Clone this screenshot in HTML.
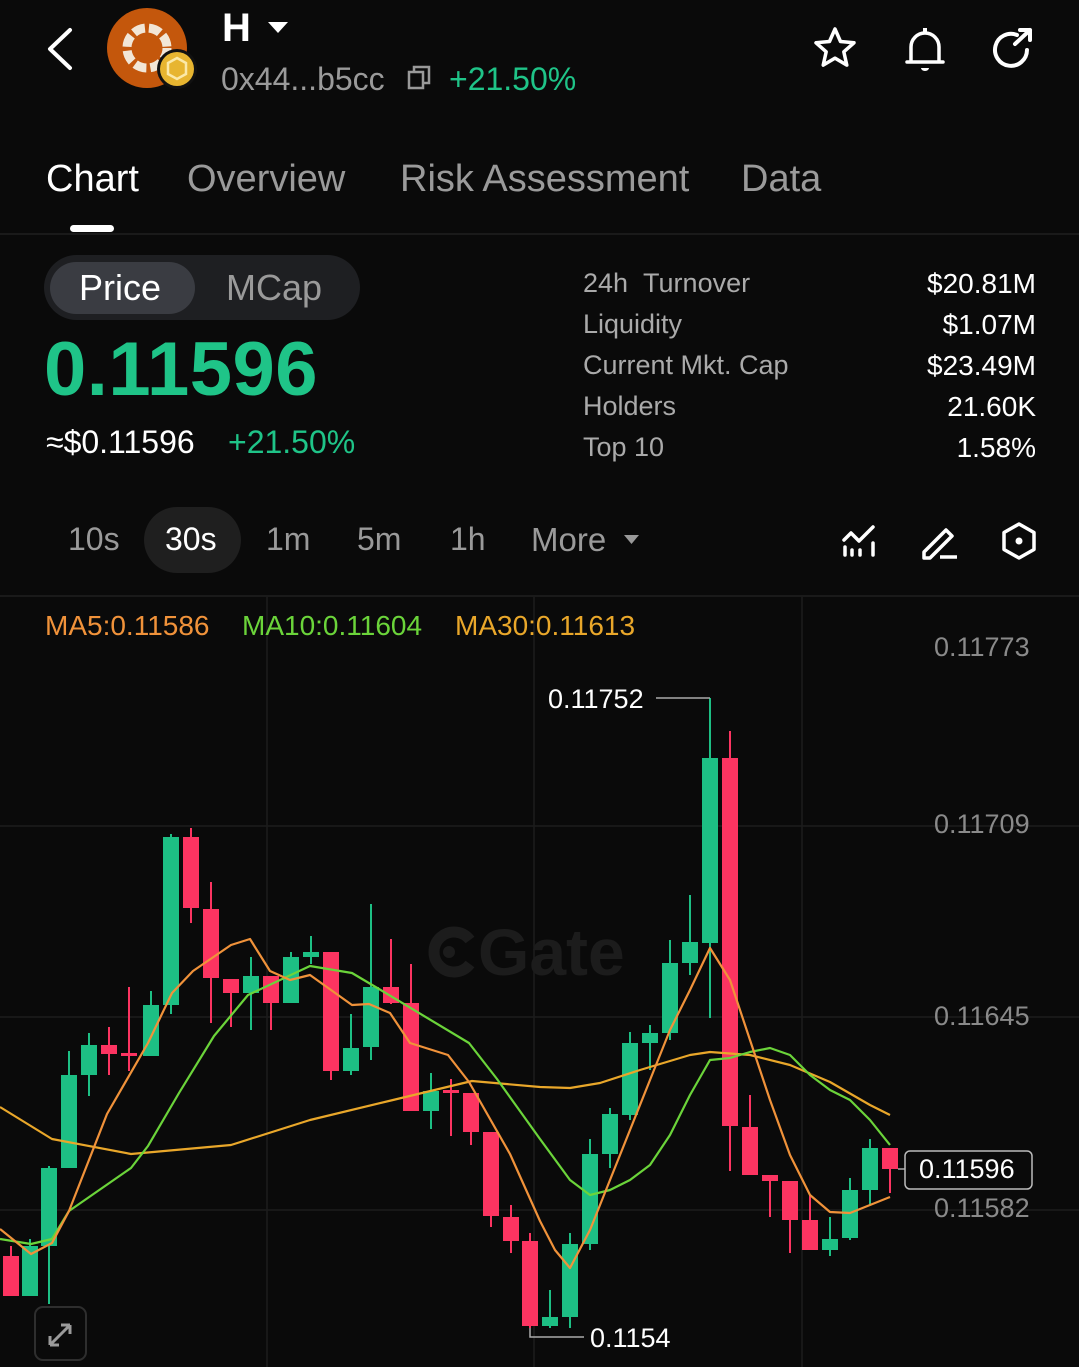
<!DOCTYPE html>
<html><head><meta charset="utf-8"><style>
*{margin:0;padding:0;box-sizing:border-box}
body{width:1079px;height:1367px;background:#0a0a0a;font-family:"Liberation Sans",sans-serif;color:#fff;position:relative;overflow:hidden}
.a{position:absolute;white-space:nowrap}
.g{color:#1fc488}
.gr{color:#9a9a9a}
</style></head><body>
<svg class="a" style="left:0;top:0" width="1079" height="110">
<polyline points="70,30 50,49 70,68" fill="none" stroke="#fff" stroke-width="4" stroke-linecap="round" stroke-linejoin="round"/>
<circle cx="147" cy="48" r="40" fill="#c4570c"/>
<circle cx="147" cy="48" r="20" fill="none" stroke="#f2e6d6" stroke-width="9" stroke-dasharray="12 4"/>
<circle cx="177" cy="69" r="20" fill="#111"/>
<circle cx="177" cy="69" r="17" fill="#e7b530"/>
<path d="M177 58 l9 5 v11 l-9 5 l-9-5 v-11z" fill="none" stroke="#fbe9a8" stroke-width="2.5"/>
<polygon points="268,22 288,22 278,33" fill="#fff"/>
<rect x="409" y="72" width="14" height="16" fill="none" stroke="#999" stroke-width="2.5"/>
<path d="M414 72 v-5 h15 v16 h-6" fill="none" stroke="#999" stroke-width="2.5"/>
<path d="M835 29 l5.5 12.5 13.5 1.3 -10.2 9 3 13.3 -11.8-7 -11.8 7 3-13.3 -10.2-9 13.5-1.3z" fill="none" stroke="#fff" stroke-width="3.5" stroke-linejoin="round"/>
<path d="M907 62 h36 M911 62 v-15 a14 14 0 0 1 28 0 v15" fill="none" stroke="#fff" stroke-width="3.5" stroke-linecap="round"/>
<path d="M921 68 a4 3 0 0 0 8 0z" fill="#fff"/><rect x="923" y="28" width="4" height="5" fill="#fff"/>
<path d="M1027 50 a16 16 0 1 1 -10 -15" fill="none" stroke="#fff" stroke-width="4" stroke-linecap="round"/>
<path d="M1015 44 l15-14 M1020 30 h10 v10" fill="none" stroke="#fff" stroke-width="4" stroke-linecap="round" stroke-linejoin="round"/>
</svg>
<div class="a" style="left:222px;top:6px;font-size:40px;font-weight:bold">H</div>
<div class="a gr" style="left:221px;top:61px;font-size:32px">0x44...b5cc</div>
<div class="a g" style="left:449px;top:61px;font-size:32px">+21.50%</div>
<div class="a" style="left:46px;top:158px;font-size:38px">Chart</div>
<div class="a gr" style="left:187px;top:158px;font-size:38px">Overview</div>
<div class="a gr" style="left:400px;top:158px;font-size:38px">Risk Assessment</div>
<div class="a gr" style="left:741px;top:158px;font-size:38px">Data</div>
<div class="a" style="left:70px;top:225px;width:44px;height:7px;border-radius:4px;background:#fff"></div>
<div class="a" style="left:0;top:233px;width:1079px;height:2px;background:#1a1a1a"></div>
<div class="a" style="left:44px;top:255px;width:316px;height:65px;border-radius:33px;background:#1e1f22"></div>
<div class="a" style="left:50px;top:262px;width:145px;height:52px;border-radius:26px;background:#3a3c42"></div>
<div class="a" style="left:79px;top:267px;font-size:36px">Price</div>
<div class="a gr" style="left:226px;top:267px;font-size:36px">MCap</div>
<div class="a g" style="left:44px;top:326px;font-size:76px;font-weight:bold;letter-spacing:0.5px">0.11596</div>
<div class="a" style="left:46px;top:424px;font-size:32px">≈$0.11596</div>
<div class="a g" style="left:228px;top:424px;font-size:32px">+21.50%</div>
<div class="a" style="left:583px;top:263px;width:453px;font-size:27px;line-height:41px">
<div style="display:flex;justify-content:space-between"><span style="color:#aaa">24h&nbsp;&nbsp;Turnover</span><span style="font-size:28px">$20.81M</span></div>
<div style="display:flex;justify-content:space-between"><span style="color:#aaa">Liquidity</span><span style="font-size:28px">$1.07M</span></div>
<div style="display:flex;justify-content:space-between"><span style="color:#aaa">Current Mkt. Cap</span><span style="font-size:28px">$23.49M</span></div>
<div style="display:flex;justify-content:space-between"><span style="color:#aaa">Holders</span><span style="font-size:28px">21.60K</span></div>
<div style="display:flex;justify-content:space-between"><span style="color:#aaa">Top 10</span><span style="font-size:28px">1.58%</span></div>
</div>
<div class="a" style="left:144px;top:507px;width:97px;height:66px;border-radius:33px;background:#1f1f1f"></div>
<div class="a gr" style="left:68px;top:521px;font-size:32px">10s</div>
<div class="a" style="left:165px;top:521px;font-size:32px">30s</div>
<div class="a gr" style="left:266px;top:521px;font-size:32px">1m</div>
<div class="a gr" style="left:357px;top:521px;font-size:32px">5m</div>
<div class="a gr" style="left:450px;top:521px;font-size:32px">1h</div>
<div class="a gr" style="left:531px;top:521px;font-size:33px">More</div>
<svg class="a" style="left:0;top:500px" width="1079" height="90">
<polygon points="624,35 639,35 631.5,44" fill="#999"/>
<path d="M845 55 v-8 M852 55 v-5 M860 55 v-5 M873 55 v-12 M844 40 l7-7 8 8 14-14" fill="none" stroke="#fff" stroke-width="3.5" stroke-linecap="round" stroke-linejoin="round"/>
<path d="M924 52 l22-22 6 6 -22 22 h-6z M940 57 h17" fill="none" stroke="#fff" stroke-width="3.5" stroke-linejoin="round"/>
<path d="M1019 24 l15 8.5 v17 l-15 8.5 -15-8.5 v-17z" fill="none" stroke="#fff" stroke-width="3.5" stroke-linejoin="round"/>
<circle cx="1019" cy="41" r="3.5" fill="#fff"/>
</svg>
<div class="a" style="left:0;top:595px;width:1079px;height:2px;background:#1a1a1a"></div>
<svg class="a" style="left:0;top:0" width="1079" height="1367">
<g stroke="#1c1c1c" stroke-width="1.5">
<line x1="0" y1="826" x2="1079" y2="826"/><line x1="0" y1="1017" x2="1079" y2="1017"/><line x1="0" y1="1210" x2="1079" y2="1210"/>
<line x1="267" y1="597" x2="267" y2="1367"/><line x1="534" y1="597" x2="534" y2="1367"/><line x1="802" y1="597" x2="802" y2="1367"/>
</g>
<path d="M470 940 a20 20 0 1 0 0 24" fill="none" stroke="#1c1c1c" stroke-width="11"/>
<circle cx="449" cy="952" r="6" fill="#1c1c1c"/>
<text x="478" y="975" font-family="Liberation Sans" font-size="66" font-weight="bold" fill="#1c1c1c">Gate</text>
<g stroke-width="2">
<g fill="#1dbf84" stroke="#1dbf84">
<line x1="30" y1="1239" x2="30" y2="1296"/><rect x="22" y="1246" width="16" height="50" stroke="none"/>
<line x1="49" y1="1166" x2="49" y2="1304"/><rect x="41" y="1168" width="16" height="78" stroke="none"/>
<line x1="69" y1="1051" x2="69" y2="1168"/><rect x="61" y="1075" width="16" height="93" stroke="none"/>
<line x1="89" y1="1033" x2="89" y2="1096"/><rect x="81" y="1045" width="16" height="30" stroke="none"/>
<line x1="151" y1="991" x2="151" y2="1056"/><rect x="143" y="1005" width="16" height="51" stroke="none"/>
<line x1="171" y1="834" x2="171" y2="1014"/><rect x="163" y="837" width="16" height="168" stroke="none"/>
<line x1="251" y1="957" x2="251" y2="1030"/><rect x="243" y="976" width="16" height="17" stroke="none"/>
<line x1="291" y1="952" x2="291" y2="1003"/><rect x="283" y="957" width="16" height="46" stroke="none"/>
<line x1="311" y1="936" x2="311" y2="964"/><rect x="303" y="952" width="16" height="5" stroke="none"/>
<line x1="351" y1="1014" x2="351" y2="1075"/><rect x="343" y="1048" width="16" height="23" stroke="none"/>
<line x1="371" y1="904" x2="371" y2="1060"/><rect x="363" y="987" width="16" height="60" stroke="none"/>
<line x1="431" y1="1073" x2="431" y2="1129"/><rect x="423" y="1091" width="16" height="20" stroke="none"/>
<line x1="550" y1="1290" x2="550" y2="1328"/><rect x="542" y="1317" width="16" height="9" stroke="none"/>
<line x1="570" y1="1233" x2="570" y2="1328"/><rect x="562" y="1244" width="16" height="73" stroke="none"/>
<line x1="590" y1="1139" x2="590" y2="1250"/><rect x="582" y="1154" width="16" height="90" stroke="none"/>
<line x1="610" y1="1108" x2="610" y2="1168"/><rect x="602" y="1114" width="16" height="40" stroke="none"/>
<line x1="630" y1="1032" x2="630" y2="1120"/><rect x="622" y="1043" width="16" height="72" stroke="none"/>
<line x1="650" y1="1025" x2="650" y2="1070"/><rect x="642" y="1033" width="16" height="10" stroke="none"/>
<line x1="670" y1="940" x2="670" y2="1040"/><rect x="662" y="963" width="16" height="70" stroke="none"/>
<line x1="690" y1="895" x2="690" y2="975"/><rect x="682" y="942" width="16" height="21" stroke="none"/>
<line x1="710" y1="698" x2="710" y2="1018"/><rect x="702" y="758" width="16" height="185" stroke="none"/>
<line x1="830" y1="1217" x2="830" y2="1256"/><rect x="822" y="1239" width="16" height="11" stroke="none"/>
<line x1="850" y1="1178" x2="850" y2="1240"/><rect x="842" y="1190" width="16" height="48" stroke="none"/>
<line x1="870" y1="1139" x2="870" y2="1205"/><rect x="862" y="1148" width="16" height="42" stroke="none"/>
</g>
<g fill="#fc3461" stroke="#fc3461">
<line x1="11" y1="1246" x2="11" y2="1296"/><rect x="3" y="1256" width="16" height="40" stroke="none"/>
<line x1="109" y1="1027" x2="109" y2="1075"/><rect x="101" y="1045" width="16" height="9" stroke="none"/>
<line x1="129" y1="987" x2="129" y2="1071"/><rect x="121" y="1053" width="16" height="3" stroke="none"/>
<line x1="191" y1="828" x2="191" y2="923"/><rect x="183" y="837" width="16" height="71" stroke="none"/>
<line x1="211" y1="882" x2="211" y2="1023"/><rect x="203" y="909" width="16" height="69" stroke="none"/>
<line x1="231" y1="979" x2="231" y2="1027"/><rect x="223" y="979" width="16" height="14" stroke="none"/>
<line x1="271" y1="976" x2="271" y2="1030"/><rect x="263" y="976" width="16" height="27" stroke="none"/>
<line x1="331" y1="952" x2="331" y2="1080"/><rect x="323" y="952" width="16" height="119" stroke="none"/>
<line x1="391" y1="939" x2="391" y2="1004"/><rect x="383" y="987" width="16" height="16" stroke="none"/>
<line x1="411" y1="964" x2="411" y2="1111"/><rect x="403" y="1003" width="16" height="108" stroke="none"/>
<line x1="451" y1="1079" x2="451" y2="1136"/><rect x="443" y="1090" width="16" height="3" stroke="none"/>
<line x1="471" y1="1093" x2="471" y2="1145"/><rect x="463" y="1093" width="16" height="39" stroke="none"/>
<line x1="491" y1="1132" x2="491" y2="1227"/><rect x="483" y="1132" width="16" height="84" stroke="none"/>
<line x1="511" y1="1205" x2="511" y2="1253"/><rect x="503" y="1217" width="16" height="24" stroke="none"/>
<line x1="530" y1="1233" x2="530" y2="1328"/><rect x="522" y="1241" width="16" height="85" stroke="none"/>
<line x1="730" y1="731" x2="730" y2="1171"/><rect x="722" y="758" width="16" height="368" stroke="none"/>
<line x1="750" y1="1095" x2="750" y2="1175"/><rect x="742" y="1127" width="16" height="48" stroke="none"/>
<line x1="770" y1="1175" x2="770" y2="1217"/><rect x="762" y="1175" width="16" height="6" stroke="none"/>
<line x1="790" y1="1181" x2="790" y2="1253"/><rect x="782" y="1181" width="16" height="39" stroke="none"/>
<line x1="810" y1="1195" x2="810" y2="1250"/><rect x="802" y="1220" width="16" height="30" stroke="none"/>
<line x1="890" y1="1148" x2="890" y2="1193"/><rect x="882" y="1148" width="16" height="21" stroke="none"/>
</g>
</g>
<g fill="none" stroke-width="2.2" stroke-linejoin="round">
<polyline stroke="#e9a72a" points="0,1107 52,1139 131,1154 231,1145 310,1120 393,1100 472,1081 540,1087 570,1088 600,1083 640,1070 690,1055 710,1052 750,1055 790,1065 830,1082 870,1105 890,1115"/>
<polyline stroke="#6bd43a" points="0,1239 31,1244 52,1239 69,1211 131,1168 148,1146 179,1093 214,1036 248,995 310,966 352,973 379,989 469,1043 497,1079 540,1139 570,1180 590,1195 610,1190 630,1180 650,1165 670,1135 690,1095 710,1060 730,1058 750,1052 770,1048 790,1055 810,1075 830,1090 850,1100 870,1120 890,1145"/>
<polyline stroke="#f0923a" points="0,1229 31,1254 52,1243 69,1211 107,1114 148,1043 172,993 193,971 231,945 250,939 270,971 290,980 310,975 352,1005 369,1004 390,1013 410,1043 448,1055 469,1082 510,1154 540,1221 555,1250 570,1268 590,1230 610,1180 630,1130 650,1080 670,1030 690,990 710,948 730,980 750,1040 770,1100 790,1155 810,1195 830,1212 850,1213 870,1205 890,1197"/>
</g>
<polyline points="656,698 710,698" stroke="#aaa" stroke-width="1.5" fill="none"/>
<polyline points="530,1328 530,1337 584,1337" stroke="#aaa" stroke-width="1.5" fill="none"/>
<line x1="898" y1="1169" x2="905" y2="1169" stroke="#aaa" stroke-width="1.5"/>
<rect x="905" y="1151" width="127" height="38" rx="5" fill="#0a0a0a" stroke="#bbb" stroke-width="1.5"/>
<rect x="35" y="1307" width="51" height="53" rx="8" fill="#0a0a0a" stroke="#2e2e2e" stroke-width="2"/>
<path d="M50 1345 l20-20 M50 1345 v-9 M50 1345 h9 M70 1325 h-9 M70 1325 v9" stroke="#9a9a9a" stroke-width="3" fill="none"/>
</svg>
<div class="a" style="left:45px;top:610px;font-size:28px;color:#f0923a">MA5:0.11586</div>
<div class="a" style="left:242px;top:610px;font-size:28px;color:#6bd43a">MA10:0.11604</div>
<div class="a" style="left:455px;top:610px;font-size:28px;color:#e9a72a">MA30:0.11613</div>
<div class="a" style="left:934px;top:632px;font-size:27px;color:#8a8a8a">0.11773</div>
<div class="a" style="left:934px;top:809px;font-size:27px;color:#8a8a8a">0.11709</div>
<div class="a" style="left:934px;top:1001px;font-size:27px;color:#8a8a8a">0.11645</div>
<div class="a" style="left:934px;top:1193px;font-size:27px;color:#8a8a8a">0.11582</div>
<div class="a" style="left:919px;top:1154px;font-size:27px">0.11596</div>
<div class="a" style="left:548px;top:684px;font-size:27px">0.11752</div>
<div class="a" style="left:590px;top:1323px;font-size:27px">0.1154</div>
</body></html>
